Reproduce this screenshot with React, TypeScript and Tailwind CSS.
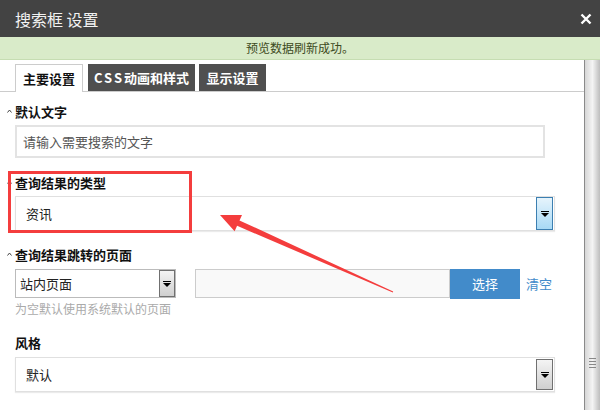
import React from "react";

const font = { fontFamily: '"Noto Sans CJK SC", "Noto Sans", sans-serif' };

function DropArrow() {
  return (
    <svg width="8" height="6" viewBox="0 0 8 6">
      <rect x="0" y="0" width="8" height="1" fill="#000" />
      <polygon points="0,2 8,2 4,6" fill="#000" />
    </svg>
  );
}

function Caret() {
  return (
    <svg className="absolute left-[-8px] top-[7px]" width="5" height="4" viewBox="0 0 5 4">
      <path d="M0.5 3.5 L2.5 1 L4.5 3.5" fill="none" stroke="#444" strokeWidth="1" />
    </svg>
  );
}

export default function App() {
  return (
    <div className="relative h-[410px] w-[600px] overflow-hidden bg-white" style={font}>
      {/* Title bar */}
      <div className="flex h-[37px] items-center justify-between bg-[#434343] pl-[15px] pr-[8px]">
        <div className="text-[16px] text-[#f2f2f2]">搜索框 设置</div>
        <svg width="12" height="12" viewBox="0 0 12 12">
          <path d="M1.5 1.5 L10.5 10.5 M10.5 1.5 L1.5 10.5" stroke="#fff" strokeWidth="2.4" />
        </svg>
      </div>

      {/* Notice */}
      <div className="h-[23px] border-b border-[#c6ddb2] bg-[#d9ebc9] text-center text-[12px] leading-[22px] text-[#3d4a22]">
        预览数据刷新成功。
      </div>

      <div className="flex h-[350px]">
        <div className="flex-1">
          {/* Tabs */}
          <div className="flex items-end gap-[5px] border-b border-[#cccccc] pl-[15px] pt-[4px]">
            <div className="-mb-px flex h-[28px] w-[68px] items-center justify-center border border-b-0 border-[#cccccc] bg-white text-[13px] font-bold text-[#111]">
              主要设置
            </div>
            <div className="flex h-[27px] w-[107px] items-center justify-center bg-[#4f4f4f] text-[13px] font-bold text-white">
              <span className="tracking-[2px]">CSS</span>动画和样式
            </div>
            <div className="-ml-[1px] flex h-[27px] w-[67px] items-center justify-center bg-[#4f4f4f] text-[13px] font-bold text-white">
              显示设置
            </div>
          </div>

          <div className="pl-[15px]">
            {/* 默认文字 */}
            <div className="relative mt-[10px] h-[20px] text-[13px] font-bold leading-[20px] text-[#111]">
              <Caret />
              默认文字
            </div>
            <div className="mt-[3px] flex h-[33px] w-[530px] items-center border-2 border-[#e3e3e3] px-[6px] text-[13px] text-[#555]">
              请输入需要搜索的文字
            </div>

            {/* 查询结果的类型 */}
            <div className="relative mt-[15px] h-[20px] text-[13px] font-bold leading-[20px] text-[#111]">
              <Caret />
              查询结果的类型
            </div>
            <div className="mt-[3px] flex h-[35px] w-[540px] items-center justify-between border border-[#e0e0e0] pl-[10px] pr-px text-[13px] text-[#222] shadow-[0_1px_1px_rgba(0,0,0,0.08)]">
              <span>资讯</span>
              <div className="flex h-[33px] w-[17px] items-center justify-center border border-[#3c7fb1] bg-gradient-to-b from-[#e6f4fc] to-[#a7d9f5]">
                <DropArrow />
              </div>
            </div>

            {/* 查询结果跳转的页面 */}
            <div className="relative mt-[14px] h-[20px] text-[13px] font-bold leading-[20px] text-[#111]">
              <Caret />
              查询结果跳转的页面
            </div>
            <div className="mt-[4px] flex h-[29px] items-center">
              <div className="flex h-[29px] w-[161px] items-center justify-between border border-[#bbbbbb] pl-[4px] text-[13px] text-[#222]">
                <span>站内页面</span>
                <div className="flex h-[27px] w-[16px] items-center justify-center border border-[#707070] bg-gradient-to-b from-[#f4f4f4] to-[#cfcfcf]">
                  <DropArrow />
                </div>
              </div>
              <div className="ml-[19px] h-[29px] w-[255px] border border-[#cccccc] bg-[#f9f9f9]" />
              <div className="flex h-[30px] w-[70px] items-center justify-center bg-[#428bca] text-[13px] text-white">
                选择
              </div>
              <div className="ml-[6px] text-[13px] text-[#428bca]">清空</div>
            </div>
            <div className="mt-[2px] h-[18px] text-[12px] leading-[18px] text-[#aaaaaa]">为空默认使用系统默认的页面</div>

            {/* 风格 */}
            <div className="mt-[15px] h-[20px] text-[13px] font-bold leading-[20px] text-[#111]">风格</div>
            <div className="mt-[4px] flex h-[35px] w-[540px] items-center justify-between border border-[#e0e0e0] pl-[10px] pr-px text-[13px] text-[#222] shadow-[0_1px_1px_rgba(0,0,0,0.08)]">
              <span>默认</span>
              <div className="flex h-[31px] w-[17px] items-center justify-center border border-[#707070] bg-gradient-to-b from-[#f4f4f4] to-[#cfcfcf]">
                <DropArrow />
              </div>
            </div>
          </div>
        </div>

        {/* Scrollbar */}
        <div className="flex w-[16px] flex-col items-center justify-end border-l border-[#8a8a8a] bg-gradient-to-r from-[#d6d6d6] via-[#f4f4f4] to-[#bdbdbd] pb-[42px]">
          <div className="flex flex-col gap-[2px]">
            <div className="h-px w-[7px] bg-[#888]" />
            <div className="h-px w-[7px] bg-[#888]" />
            <div className="h-px w-[7px] bg-[#888]" />
            <div className="h-px w-[7px] bg-[#888]" />
          </div>
        </div>
      </div>

      {/* Annotation box */}
      <div className="absolute left-[8px] top-[171px] h-[62px] w-[184px] border-[3px] border-[#f43d3d]" />

      {/* Annotation arrow */}
      <svg className="pointer-events-none absolute left-0 top-0" width="600" height="410">
        <polygon
          points="220,215 242,215 239.5,220.4 393.2,291.5 392.8,292.5 237.1,225.8 234.6,231.3"
          fill="#f43d3d"
        />
      </svg>
    </div>
  );
}
